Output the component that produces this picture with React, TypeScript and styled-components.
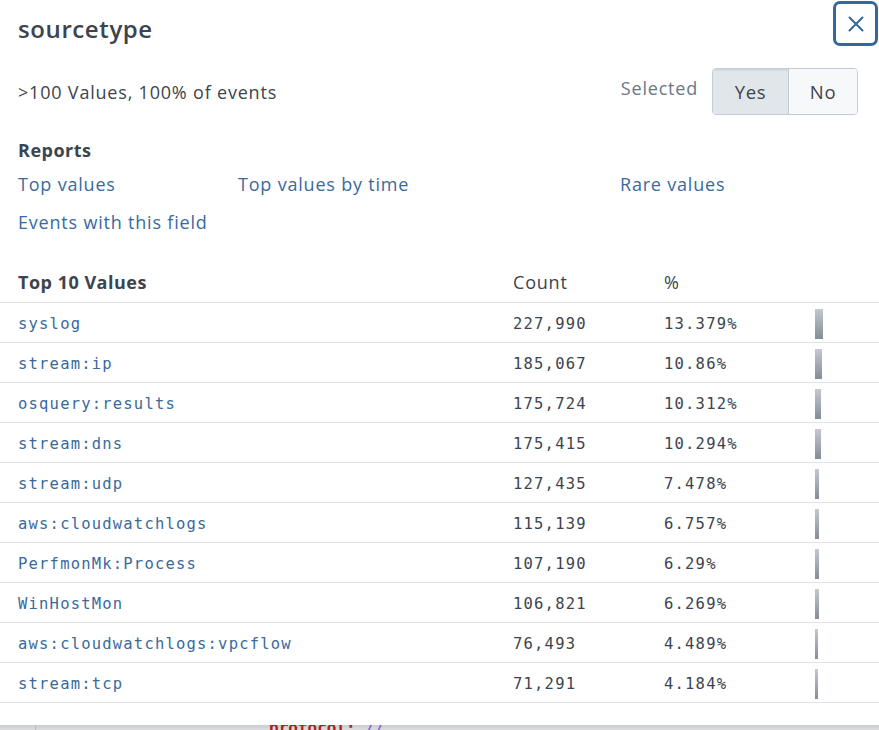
import React from "react";
import styled, { createGlobalStyle } from "styled-components";

const GlobalStyle = createGlobalStyle`
  html, body { margin: 0; padding: 0; background: #ffffff; }
  body { font-family: "Open Sans", "Lato", sans-serif; color: #3c444d; }
  * { box-sizing: border-box; }
`;

const Panel = styled.div`
  width: 879px;
  height: 730px;
  background: #ffffff;
  display: flex;
  flex-direction: column;
  overflow: hidden;
`;

const Header = styled.div`
  display: flex;
  justify-content: space-between;
  align-items: flex-start;
  padding: 1px 1px 0 18px;
  height: 68px;
`;

const Title = styled.h1`
  margin: 13px 0 0 0;
  font-size: 24px;
  line-height: 30px;
  font-weight: 600;
  letter-spacing: 0.6px;
  color: #3c444d;
`;

const CloseButton = styled.button`
  width: 45px;
  height: 45px;
  border: 3px solid #35679a;
  border-radius: 7px;
  background: #ffffff;
  display: flex;
  align-items: center;
  justify-content: center;
  padding: 0;
  cursor: pointer;
`;

const Summary = styled.div`
  display: flex;
  align-items: center;
  justify-content: space-between;
  height: 47px;
  padding: 0 21px 0 18px;
`;

const SummaryText = styled.div`
  font-size: 18px;
  letter-spacing: 0.8px;
  line-height: 24px;
  color: #3c444d;
`;

const SelectGroup = styled.div`
  display: flex;
  align-items: center;
  gap: 14px;
`;

const SelectLabel = styled.span`
  font-size: 18px;
  letter-spacing: 0.8px;
  color: #6b7785;
  margin-top: -8px;
`;

const Toggle = styled.div`
  display: flex;
  height: 47px;
  border: 1px solid #c3cbd4;
  border-radius: 4px;
  overflow: hidden;
`;

const ToggleOption = styled.div<{ $active?: boolean }>`
  display: flex;
  align-items: center;
  justify-content: center;
  width: ${(p) => (p.$active ? "75px" : "69px")};
  font-size: 18.5px;
  letter-spacing: 0.6px;
  color: #3c444d;
  background: ${(p) => (p.$active ? "#e1e6eb" : "#f7f8fa")};
  box-shadow: ${(p) => (p.$active ? "inset 0 2px 1px rgba(0,0,0,0.06)" : "none")};
  border-left: ${(p) => (p.$active ? "none" : "1px solid #c3cbd4")};
`;

const Reports = styled.div`
  padding: 23px 18px 0 18px;
`;

const SectionTitle = styled.div`
  font-size: 18px;
  letter-spacing: 0.5px;
  line-height: 24px;
  font-weight: 700;
  color: #3c444d;
`;

const LinkGrid = styled.div`
  display: grid;
  grid-template-columns: 220px 382px 1fr;
  row-gap: 14px;
  margin-top: 10px;
`;

const Link = styled.a`
  font-size: 18px;
  letter-spacing: 0.8px;
  line-height: 24px;
  color: #3a6a9c;
  text-decoration: none;
  cursor: pointer;
`;

const Table = styled.div`
  margin-top: 29px;
  display: flex;
  flex-direction: column;
`;

const Row = styled.div`
  display: grid;
  grid-template-columns: 495px 151px 151px 1fr;
  align-items: center;
  height: 40px;
  padding-left: 18px;
  border-bottom: 1px solid #e1e2e8;
`;

const HeadCell = styled.div<{ $bold?: boolean }>`
  font-size: 18px;
  letter-spacing: ${(p) => (p.$bold ? "0.5px" : "0.8px")};
  font-weight: ${(p) => (p.$bold ? 700 : 400)};
  color: #3c444d;
  margin-top: -1px;
`;

const ValueCell = styled.div`
  font-family: "DejaVu Sans Mono", "Liberation Mono", monospace;
  font-size: 15.5px;
  letter-spacing: 1.2px;
  color: #3a6a9c;
  white-space: nowrap;
  margin-top: 3px;
`;

const NumCell = styled.div`
  font-family: "DejaVu Sans Mono", "Liberation Mono", monospace;
  font-size: 15.5px;
  letter-spacing: 1.2px;
  color: #3c444d;
  white-space: nowrap;
  margin-top: 3px;
`;

const Bar = styled.div`
  height: 30px;
  margin-top: 2px;
  background: linear-gradient(to bottom, #c4c9d0, #858c95);
`;

const Spacer = styled.div`
  flex: 1;
`;

const Behind = styled.div`
  height: 5px;
  flex: none;
  background: linear-gradient(to bottom, #c9ccd0, #dcdee1);
  display: flex;
  overflow: hidden;
`;

const BehindGutter = styled.div`
  width: 36px;
  flex: none;
  border-right: 1px solid #b9bdc2;
`;

const BehindCode = styled.div`
  margin-left: 233px;
  font-family: "DejaVu Sans Mono", monospace;
  font-weight: 700;
  font-size: 16px;
  line-height: 16px;
  margin-top: -5px;
  color: #b0201a;
  white-space: pre;
`;

const Slash = styled.span`
  color: #7a5ad0;
  font-weight: 400;
`;

const rows = [
  ["syslog", "227,990", "13.379%", 13.379],
  ["stream:ip", "185,067", "10.86%", 10.86],
  ["osquery:results", "175,724", "10.312%", 10.312],
  ["stream:dns", "175,415", "10.294%", 10.294],
  ["stream:udp", "127,435", "7.478%", 7.478],
  ["aws:cloudwatchlogs", "115,139", "6.757%", 6.757],
  ["PerfmonMk:Process", "107,190", "6.29%", 6.29],
  ["WinHostMon", "106,821", "6.269%", 6.269],
  ["aws:cloudwatchlogs:vpcflow", "76,493", "4.489%", 4.489],
  ["stream:tcp", "71,291", "4.184%", 4.184],
] as const;

export default function App() {
  return (
    <>
      <GlobalStyle />
      <Panel>
        <Header>
          <Title>sourcetype</Title>
          <CloseButton aria-label="Close">
            <svg width="18" height="18" viewBox="0 0 18 18">
              <path d="M2.5 2.5 L15.5 15.5 M15.5 2.5 L2.5 15.5" stroke="#35679a" strokeWidth="2" strokeLinecap="round" />
            </svg>
          </CloseButton>
        </Header>
        <Summary>
          <SummaryText>&gt;100 Values, 100% of events</SummaryText>
          <SelectGroup>
            <SelectLabel>Selected</SelectLabel>
            <Toggle>
              <ToggleOption $active>Yes</ToggleOption>
              <ToggleOption>No</ToggleOption>
            </Toggle>
          </SelectGroup>
        </Summary>
        <Reports>
          <SectionTitle>Reports</SectionTitle>
          <LinkGrid>
            <Link>Top values</Link>
            <Link>Top values by time</Link>
            <Link>Rare values</Link>
            <Link>Events with this field</Link>
          </LinkGrid>
        </Reports>
        <Table>
          <Row>
            <HeadCell $bold>Top 10 Values</HeadCell>
            <HeadCell>Count</HeadCell>
            <HeadCell>%</HeadCell>
            <div />
          </Row>
          {rows.map(([name, count, pct, v]) => (
            <Row key={name}>
              <ValueCell>{name}</ValueCell>
              <NumCell>{count}</NumCell>
              <NumCell>{pct}</NumCell>
              <div>
                <Bar style={{ width: `${Math.max(2, Math.round(v * 0.6))}px` }} />
              </div>
            </Row>
          ))}
        </Table>
        <Spacer />
        <Behind>
          <BehindGutter />
          <BehindCode>
            protocol: <Slash>//</Slash>
          </BehindCode>
        </Behind>
      </Panel>
    </>
  );
}
